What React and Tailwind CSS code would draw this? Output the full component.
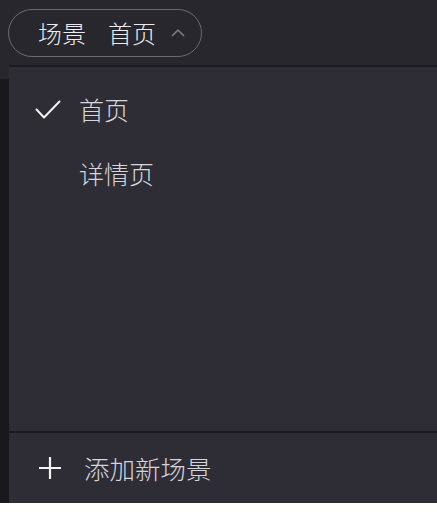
import React from "react";

function CheckIcon() {
  return (
    <svg width="26" height="20" viewBox="0 0 26 20" fill="none" stroke="#f2f2f2" strokeWidth="2" strokeLinecap="round" strokeLinejoin="round">
      <path d="M1.5 9.5 L9 17.5 L24.5 1.5" />
    </svg>
  );
}

function PlusIcon() {
  return (
    <svg width="24" height="24" viewBox="0 0 24 24" fill="none" stroke="#f4f4f4" strokeWidth="2.2">
      <path d="M12 1 V23 M1 12 H23" />
    </svg>
  );
}

function ChevronUp() {
  return (
    <svg width="14" height="9" viewBox="0 0 14 9" fill="none" stroke="#7d7c84" strokeWidth="1.6" strokeLinecap="round" strokeLinejoin="round">
      <path d="M1.5 7.5 L7 2 L12.5 7.5" />
    </svg>
  );
}

const scenes = [
  { name: "首页", active: true },
  { name: "详情页", active: false },
];

export default function App() {
  return (
    <div
      className="w-[437px] h-[523px] bg-white flex flex-col"
      style={{ fontFamily: '"Noto Sans CJK SC", "Noto Sans", sans-serif' }}
    >
      {/* top bar */}
      <div className="h-[65px] bg-[#28272e] flex items-center pl-[8px] shrink-0">
        <button className="h-[48px] w-[194px] rounded-full border-[1.5px] border-[#6c6b72] flex items-center pl-[29px] gap-[22px] text-[24px] font-light text-[#ececee]">
          <span>场景</span>
          <span className="flex items-center gap-[15px]">
            首页
            <ChevronUp />
          </span>
        </button>
      </div>

      <div className="flex h-[438px] shrink-0">
        {/* left strip */}
        <div className="w-[9px] flex flex-col shrink-0">
          <div className="h-[14px] bg-[#28272e]" />
          <div className="flex-1 bg-[#19191d]" />
        </div>

        {/* dropdown panel */}
        <div className="flex-1 flex flex-col bg-[#2e2d36] border-t-[2px] border-[#1c1b22]">
          <div className="flex-1 pt-[11px]">
            {scenes.map((s) => (
              <div key={s.name} className="h-[64px] flex items-center pl-[26px] gap-[18px]">
                <div className="w-[26px] flex">
                  {s.active && <CheckIcon />}
                </div>
                <span className="text-[25px] font-light text-[#d6d6da]">{s.name}</span>
              </div>
            ))}
          </div>
          <div className="h-[72px] border-t-[2px] border-[#1c1b22] flex items-center pl-[29px] gap-[22px] shrink-0">
            <PlusIcon />
            <span className="text-[25.5px] font-light text-[#d6d6da]">添加新场景</span>
          </div>
        </div>
      </div>
    </div>
  );
}
